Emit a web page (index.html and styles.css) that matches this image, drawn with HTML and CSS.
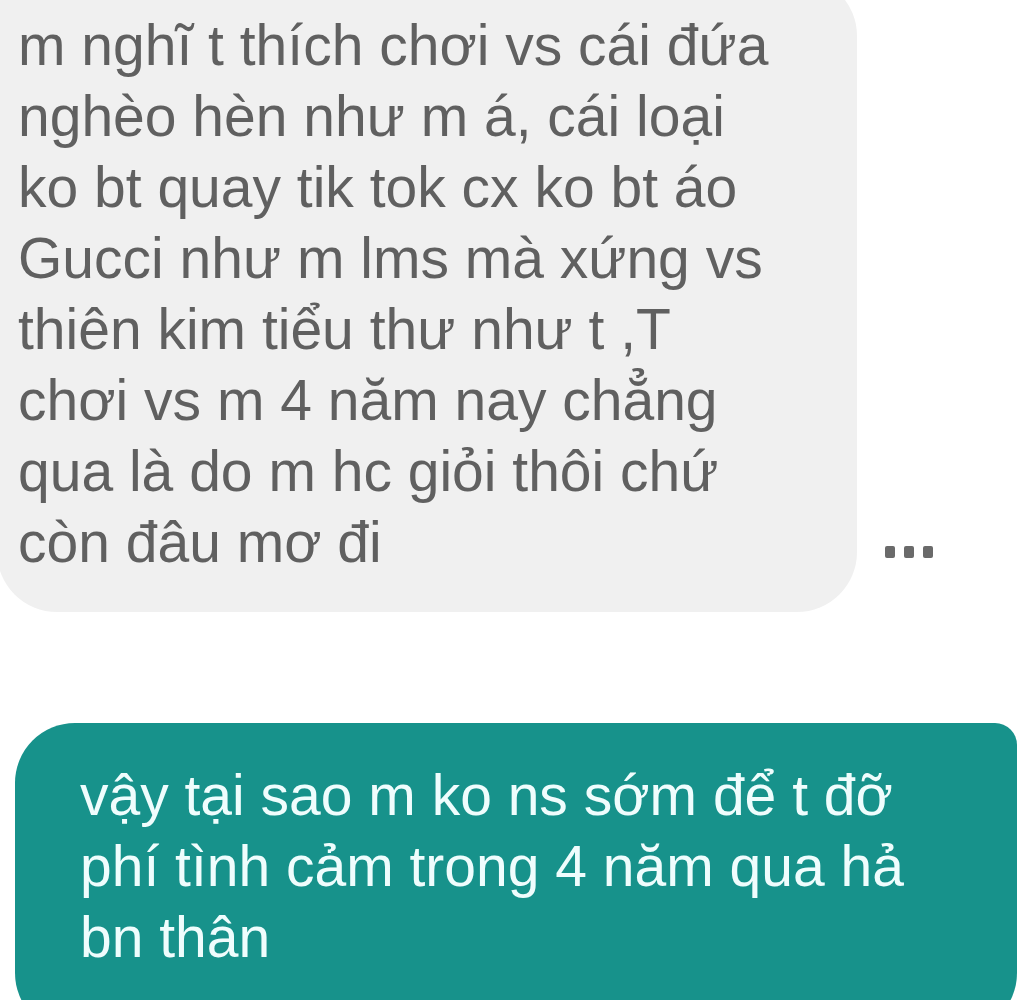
FILE: index.html
```html
<!DOCTYPE html>
<html lang="vi">
<head>
    <meta charset="UTF-8">
    <title>Tin nhắn</title>
    <link rel="stylesheet" href="styles.css">
</head>
<body>
    <div class="chat">
        <div class="row row-in">
            <div class="bubble bubble-in">
                m nghĩ t thích chơi vs cái đứa<br>
                nghèo hèn như m á, cái loại<br>
                ko bt quay tik tok cx ko bt áo<br>
                Gucci như m lms mà xứng vs<br>
                thiên kim tiểu thư như t ,T<br>
                chơi vs m 4 năm nay chẳng<br>
                qua là do m hc giỏi thôi chứ<br>
                còn đâu mơ đi
            </div>
            <div class="more"><span></span><span></span><span></span></div>
        </div>
        <div class="row row-out">
            <div class="bubble bubble-out">
                vậy tại sao m ko ns sớm để t đỡ<br>
                phí tình cảm trong 4 năm qua hả<br>
                bn thân
            </div>
        </div>
    </div>
</body>
</html>
```

FILE: styles.css
```css
body {
    margin: 0;
    font-family: "Liberation Sans", Arial, sans-serif;
    background-color: #ffffff;
    height: 1000px;
    overflow: hidden;
}
.chat {
    display: flex;
    flex-direction: column;
    gap: 111px;
}
.row {
    display: flex;
    align-items: flex-end;
}
.bubble {
    font-size: 57px;
    line-height: 71px;
    box-sizing: border-box;
    white-space: nowrap;
}
.bubble-in {
    width: 860px;
    margin-left: -3px;
    margin-top: -24px;
    padding: 34px 40px 34px 21px;
    background-color: #f0f0f0;
    color: #606060;
    border-radius: 60px;
    border-top-left-radius: 20px;
}
.more {
    display: flex;
    gap: 9px;
    margin: 0 0 54px 28px;
}
.more span {
    width: 10px;
    height: 12px;
    background-color: #6a6a6a;
    border-radius: 2px;
}
.row-out {
    padding: 0 7px 0 15px;
}
.bubble-out {
    flex: 1;
    padding: 37px 40px 60px 65px;
    background-color: #17928b;
    color: #effdfd;
    border-radius: 60px;
    border-top-right-radius: 22px;
}
```
